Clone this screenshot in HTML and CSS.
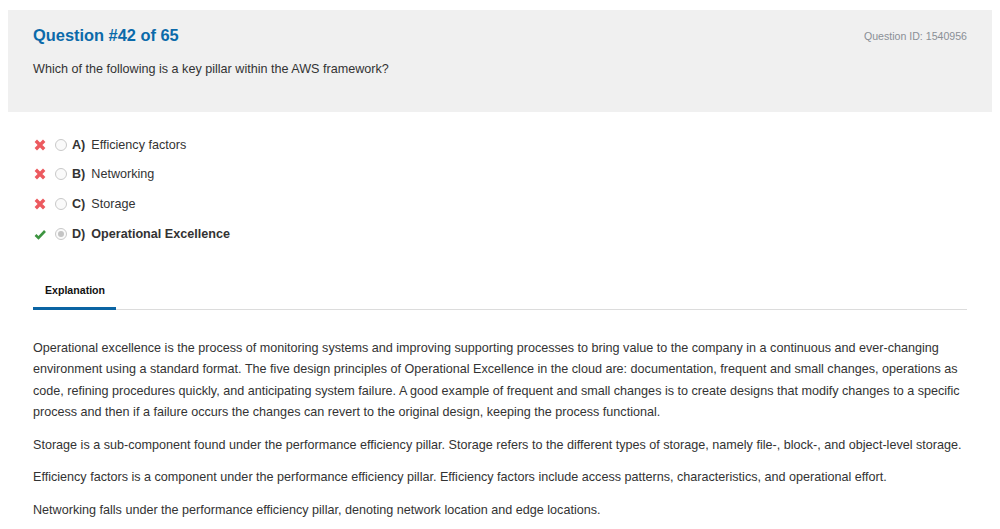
FILE: index.html
```html
<!DOCTYPE html>
<html>
<head>
<meta charset="utf-8">
<link rel="stylesheet" href="styles.css">
</head>
<body>
<div class="page">
  <div class="qbox">
    <div class="qhead">
      <h1 class="qtitle">Question #42 of 65</h1>
      <span class="qid">Question ID: 1540956</span>
    </div>
    <p class="qtext">Which of the following is a key pillar within the AWS framework?</p>
  </div>

  <ul class="options">
    <li class="opt">
      <svg class="mark" width="12" height="12" viewBox="0 0 12 12"><path d="M1.8 1.8 L10.2 10.2 M10.2 1.8 L1.8 10.2" stroke="#ec5a5f" stroke-width="3.4"/></svg>
      <span class="radio"></span>
      <span class="letter">A)</span><span class="otext">Efficiency factors</span>
    </li>
    <li class="opt">
      <svg class="mark" width="12" height="12" viewBox="0 0 12 12"><path d="M1.8 1.8 L10.2 10.2 M10.2 1.8 L1.8 10.2" stroke="#ec5a5f" stroke-width="3.4"/></svg>
      <span class="radio"></span>
      <span class="letter">B)</span><span class="otext">Networking</span>
    </li>
    <li class="opt">
      <svg class="mark" width="12" height="12" viewBox="0 0 12 12"><path d="M1.8 1.8 L10.2 10.2 M10.2 1.8 L1.8 10.2" stroke="#ec5a5f" stroke-width="3.4"/></svg>
      <span class="radio"></span>
      <span class="letter">C)</span><span class="otext">Storage</span>
    </li>
    <li class="opt correct">
      <svg class="mark" width="12" height="12" viewBox="0 0 12 12"><path d="M1.5 7 L4.5 10 L11 3" stroke="#3d9440" stroke-width="2.6" fill="none"/></svg>
      <span class="radio checked"></span>
      <span class="letter">D)</span><span class="otext">Operational Excellence</span>
    </li>
  </ul>

  <div class="tabs">
    <span class="tab">Explanation</span>
  </div>

  <div class="explain">
    <p>Operational excellence is the process of monitoring systems and improving supporting processes to bring value to the company in a continuous and ever-changing environment using a standard format. The five design principles of Operational Excellence in the cloud are: documentation, frequent and small changes, operations as code, refining procedures quickly, and anticipating system failure. A good example of frequent and small changes is to create designs that modify changes to a specific process and then if a failure occurs the changes can revert to the original design, keeping the process functional.</p>
    <p>Storage is a sub-component found under the performance efficiency pillar. Storage refers to the different types of storage, namely file-, block-, and object-level storage.</p>
    <p>Efficiency factors is a component under the performance efficiency pillar. Efficiency factors include access patterns, characteristics, and operational effort.</p>
    <p>Networking falls under the performance efficiency pillar, denoting network location and edge locations.</p>
  </div>
</div>
</body>
</html>
```

FILE: styles.css
```css
html, body {
  margin: 0;
  padding: 0;
  background: #fff;
}
body {
  font-family: "Liberation Sans", Arial, sans-serif;
  color: #333;
  font-size: 12.6px;
}
.page {
  padding: 10px 8px 0 8px;
}
.qbox {
  background: #f0f0f0;
  height: 102px;
  box-sizing: border-box;
  padding: 15px 25px 0 25px;
}
.qhead {
  display: flex;
  justify-content: space-between;
  align-items: baseline;
}
.qtitle {
  margin: 0;
  font-size: 16.4px;
  line-height: 20px;
  font-weight: bold;
  color: #0b6aaa;
}
.qid {
  font-size: 10.6px;
  color: #8a8f96;
  position: relative;
  top: -1px;
}
.qtext {
  margin: 0;
  padding-top: 14px;
  font-size: 12.6px;
  line-height: 20px;
  color: #333;
}
.options {
  list-style: none;
  margin: 0;
  padding: 18px 25px 0 25px;
}
.opt {
  display: flex;
  align-items: center;
  height: 29.67px;
  line-height: 20px;
}
.mark {
  margin-left: 1px;
  margin-right: 9px;
  flex: none;
}
.radio {
  width: 10px;
  height: 10px;
  border: 1px solid #c9c9c9;
  border-radius: 50%;
  background: #fafafa;
  margin-right: 5px;
  flex: none;
  position: relative;
}
.radio.checked::after {
  content: "";
  position: absolute;
  left: 2px;
  top: 2px;
  width: 6px;
  height: 6px;
  border-radius: 50%;
  background: #c4c4c4;
}
.letter {
  font-weight: bold;
  margin-right: 6px;
}
.correct .otext {
  font-weight: bold;
}
.tabs {
  margin: 34px 25px 0 25px;
  border-bottom: 1px solid #dcdcdc;
  display: flex;
}
.tab {
  font-size: 10.6px;
  font-weight: bold;
  color: #111;
  padding: 0 12px 10px 12px;
  line-height: 14px;
  border-bottom: 3px solid #0b64a3;
  margin-bottom: -1px;
  width: 59px;
}
.explain {
  padding: 28px 25px 0 25px;
}
.explain p {
  margin: 0 0 11px 0;
  font-size: 12.6px;
  line-height: 21.5px;
  color: #333;
}
```
